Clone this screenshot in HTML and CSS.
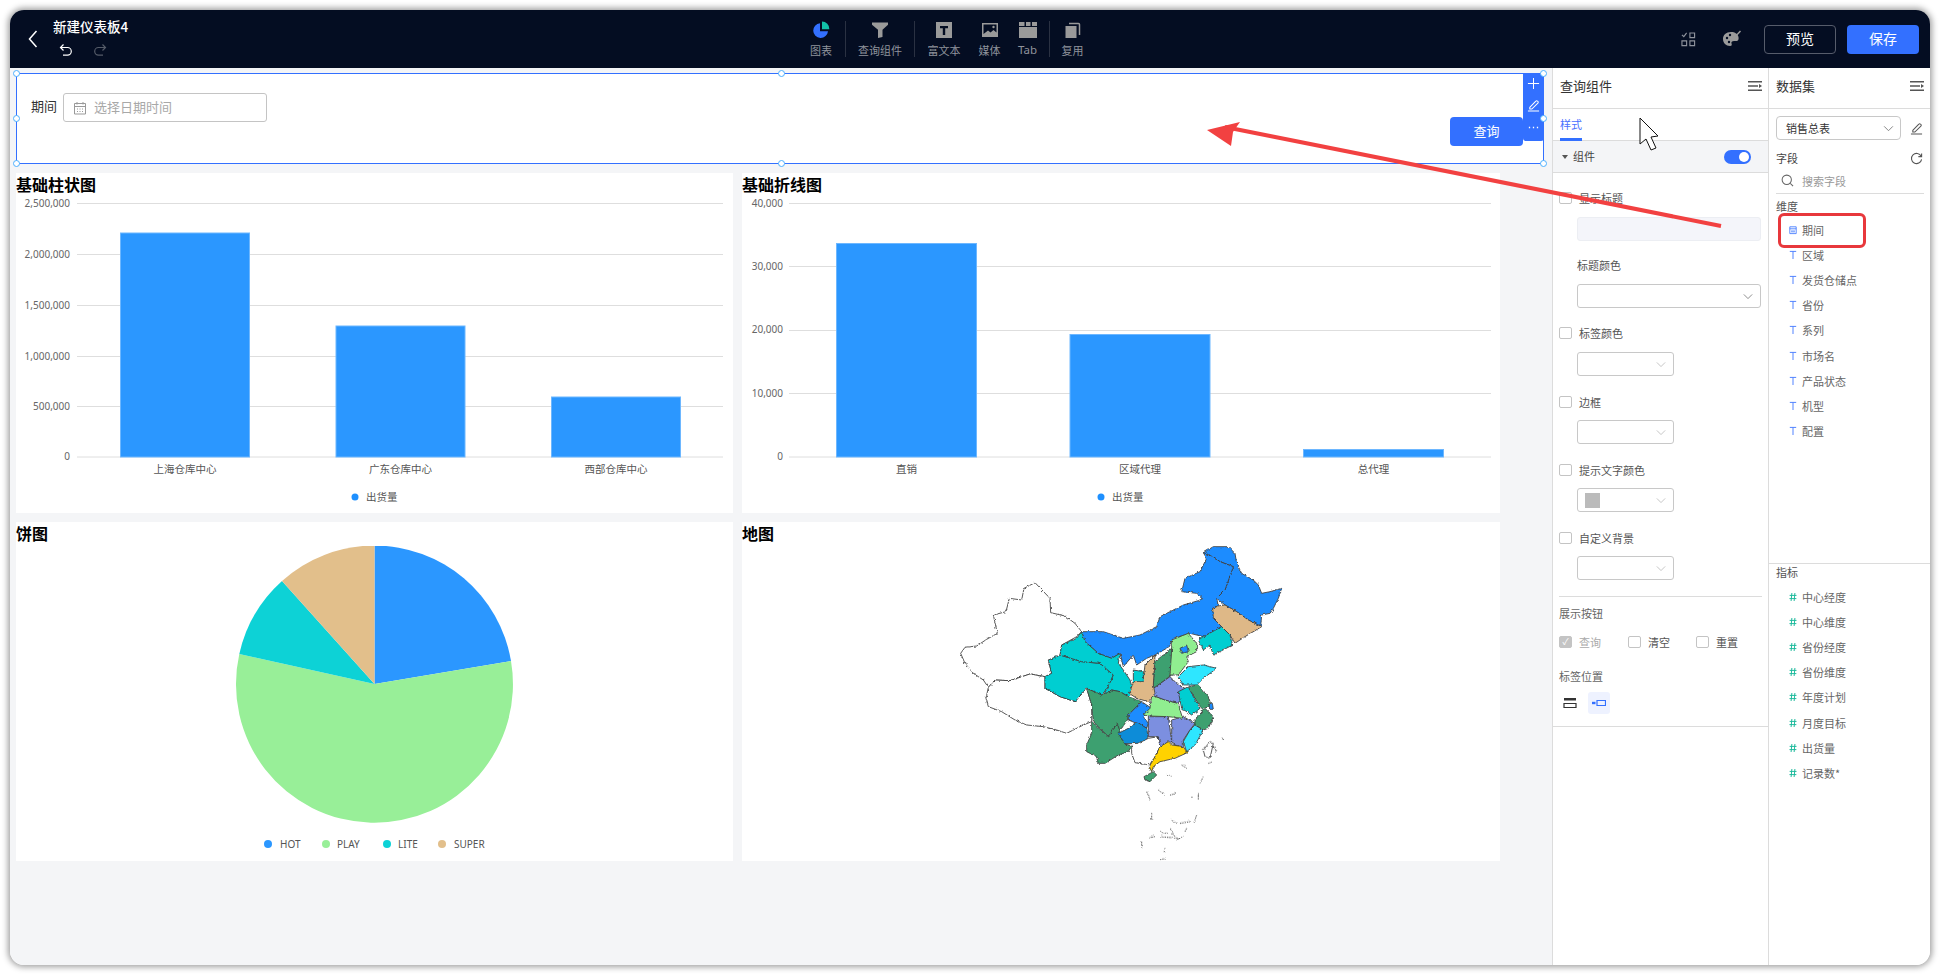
FILE: index.html
```
<!DOCTYPE html>
<html lang="zh">
<head>
<meta charset="utf-8">
<title>新建仪表板4</title>
<link rel="stylesheet" href="styles.css">
</head>
<body>
<svg class="sprite" aria-hidden="true">
  <symbol id="chev" viewBox="0 0 12 8"><path d="M1 1.5 6 6.5 11 1.5" fill="none" stroke="currentColor" stroke-width="1"/></symbol>
  <symbol id="collapse" viewBox="0 0 14 12"><path d="M0 1h14v1.6H0zM0 5.2h10v1.6H0zM0 9.4h14V11H0zM11 4l3 2-3 2z" fill="currentColor"/></symbol>
  <symbol id="pen" viewBox="0 0 14 14"><path d="M3 9 9.5 2.2a1.2 1.2 0 0 1 1.8 0l.4.4a1.2 1.2 0 0 1 0 1.8L5.2 10.8H3zM1 12.9h12" fill="none" stroke="currentColor" stroke-width="1.1"/></symbol>
  <symbol id="tee" viewBox="0 0 10 12"><path d="M1 1.5h8M5 1.5V11" fill="none" stroke="currentColor" stroke-width="1.2"/></symbol>
  <symbol id="hash" viewBox="0 0 10 12"><path d="M3.6 1 2.6 11M7.4 1 6.4 11M.8 4h8.6M.6 8h8.6" fill="none" stroke="currentColor" stroke-width="1.2"/></symbol>
</svg>
<div class="window">
  <header class="topbar">
    <div class="top-left">
      <svg class="back" viewBox="0 0 10 18"><path d="M8.5 1 1.5 9l7 8" fill="none" stroke="#fff" stroke-width="1.5"/></svg>
      <div class="doc">
        <div class="doc-title">新建仪表板4</div>
        <div class="history">
          <svg class="hist-icon" viewBox="0 0 14 14"><path d="M4.5 1.5 1.5 4.5l3 3M1.5 4.5h7a3.8 3.8 0 0 1 0 7.6H4" fill="none" stroke="#fff" stroke-width="1.2"/></svg>
          <svg class="hist-icon" viewBox="0 0 14 14"><path d="M9.5 1.5l3 3-3 3M12.5 4.5h-7a3.8 3.8 0 0 0 0 7.6H10" fill="none" stroke="#555b68" stroke-width="1.2"/></svg>
        </div>
      </div>
    </div>
    <nav class="tools">
      <div class="tool w48 sep">
        <svg class="tool-icon" viewBox="0 0 18 18"><path d="M8 2.2a7.4 7.4 0 1 0 8 8H8z" fill="#3370ff"/><path d="M10 .6a7.4 7.4 0 0 1 7.4 7.6H10z" fill="#12c2a8"/></svg>
        <span>图表</span>
      </div>
      <div class="tool w68 sep">
        <svg class="tool-icon" viewBox="0 0 18 18"><path d="M1 1.5h16v2.2l-5.5 5V16L7 17V8.700L1 3.700z" fill="#9a9a9a"/></svg>
        <span>查询组件</span>
      </div>
      <div class="tool w58">
        <svg class="tool-icon" viewBox="0 0 18 18"><path d="M1 1h16v16H1z" fill="#9a9a9a"/><path d="M5 5h8v2.200h-2.800V14H7.800V7.200H5z" fill="#040d22"/></svg>
        <span>富文本</span>
      </div>
      <div class="tool w32">
        <svg class="tool-icon" viewBox="0 0 18 18"><path d="M1 2h16v14H1z" fill="#9a9a9a"/><path d="M2.500 3.500h13v8l-3-2.500-3 2.500-2.500-2-4.500 3.500z" fill="#040d22"/><circle cx="12.500" cy="6" r="1.200" fill="#9a9a9a"/></svg>
        <span>媒体</span>
      </div>
      <div class="tool w44 sep">
        <svg class="tool-icon" viewBox="0 0 18 18"><path d="M0 1h5.500v4H0zM7 1h4.500v4H7zM13 1h5v4h-5zM0 6h18v11H0z" fill="#9a9a9a"/></svg>
        <span class="latin">Tab</span>
      </div>
      <div class="tool w46">
        <svg class="tool-icon" viewBox="0 0 18 18"><path d="M1.500 5h11v12h-11z" fill="#9a9a9a"/><path d="M5 2.500h9.500a1 1 0 0 1 1 1V14" fill="none" stroke="#9a9a9a" stroke-width="1.500"/></svg>
        <span>复用</span>
      </div>
    </nav>
    <div class="top-right">
      <svg class="right-icon layout-icon" viewBox="0 0 16 16"><path d="M1 3 3 5 6 1M9.500 1h5v5h-5zM1 9.500h5v5H1zM9.500 9.500h5v5h-5z" fill="none" stroke="#8e929c" stroke-width="1.200"/></svg>
      <svg class="right-icon palette-icon" viewBox="0 0 20 18"><path d="M9 2C4 2 1 5 1 9s3 7 7 7c2 0 2-1 1.500-2.500S10 11 12 11h2.500C16 11 17 9.500 16.500 7 16 4 13 2 9 2z" fill="#9a9a9a"/><circle cx="5" cy="8" r="1.200" fill="#040d22"/><circle cx="7" cy="12" r="1.200" fill="#040d22"/><circle cx="8" cy="5" r="1.200" fill="#040d22"/><path d="M11 9 18.500 1" stroke="#9a9a9a" stroke-width="1.500"/></svg>
      <button class="btn ghost">预览</button>
      <button class="btn primary">保存</button>
    </div>
  </header>
  <div class="main">
    <section class="canvas">
      <div class="query">
        <div class="query-form">
          <label class="query-label">期间</label>
          <div class="date-input">
            <svg class="cal" viewBox="0 0 14 14"><path d="M1.500 2.500h11v10.500h-11zM1.500 5.500h11M4 1v2.500M10 1v2.500M4 8h1M6.500 8h1M9 8h1M4 10.500h1M6.500 10.500h1M9 10.500h1" fill="none" stroke="#999" stroke-width="1"/></svg>
            <span>选择日期时间</span>
          </div>
        </div>
        <button class="query-btn">查询</button>
        <div class="side-tools">
          <svg class="side-icon" viewBox="0 0 14 14"><path d="M7 1v12M1 7h12" fill="none" stroke="#fff" stroke-width="1.100"/></svg>
          <svg class="side-icon" viewBox="0 0 14 14"><use href="#pen"/></svg>
          <svg class="side-icon" viewBox="0 0 14 14"><path d="M2 6.300h1.400v1.400H2zM6.300 6.300h1.400v1.400H6.300zM10.600 6.300H12v1.400h-1.400z" fill="#fff"/></svg>
        </div>
        <i class="handle tl"></i><i class="handle tc"></i><i class="handle tr"></i>
        <i class="handle ml"></i><i class="handle mr"></i>
        <i class="handle bl"></i><i class="handle bc"></i><i class="handle br"></i>
      </div>
      <div class="grid">
        <article class="card">
          <h2 class="card-title">基础柱状图</h2>
          <svg class="chart" viewBox="16 197 717 316">
            <g class="gridlines"><path d="M77 203.500H723M77 254.500H723M77 305.500H723M77 356.500H723M77 406.500H723M77 457H723"/></g>
            <g class="bars"><rect x="120.500" y="233" width="129" height="224"/><rect x="336" y="326" width="129" height="131"/><rect x="551.500" y="397" width="129" height="60"/></g>
            <g class="yaxis"><text x="70" y="207">2,500,000</text><text x="70" y="258">2,000,000</text><text x="70" y="309">1,500,000</text><text x="70" y="360">1,000,000</text><text x="70" y="410">500,000</text><text x="70" y="460">0</text></g>
            <g class="xaxis"><text x="185" y="473">上海仓库中心</text><text x="400.500" y="473">广东仓库中心</text><text x="616" y="473">西部仓库中心</text></g>
            <circle class="dot-blue" cx="355" cy="497" r="3.500"/><text class="legend" x="366" y="500.500">出货量</text>
          </svg>
        </article>
        <article class="card">
          <h2 class="card-title">基础折线图</h2>
          <svg class="chart" viewBox="742 197 758 316">
            <g class="gridlines"><path d="M789 203.500H1491M789 266.500H1491M789 330.500H1491M789 393.500H1491M789 457H1491"/></g>
            <g class="bars"><rect x="836.500" y="243.500" width="140" height="213.500"/><rect x="1070" y="334.500" width="140" height="122.500"/><rect x="1303.500" y="449.500" width="140" height="7.500"/></g>
            <g class="yaxis"><text x="783" y="207">40,000</text><text x="783" y="270">30,000</text><text x="783" y="333">20,000</text><text x="783" y="397">10,000</text><text x="783" y="460">0</text></g>
            <g class="xaxis"><text x="906.500" y="473">直销</text><text x="1140" y="473">区域代理</text><text x="1373.500" y="473">总代理</text></g>
            <circle class="dot-blue" cx="1101" cy="497" r="3.500"/><text class="legend" x="1112" y="500.500">出货量</text>
          </svg>
        </article>
        <article class="card">
          <h2 class="card-title">饼图</h2>
          <svg class="chart" viewBox="16 546 717 315">
            <path class="s-blue" d="M374.500 684V545.500A138.500 138.500 0 0 1 511 661Z"/>
            <path class="s-green" d="M374.500 684 511 661A138.500 138.500 0 1 1 239.300 654Z"/>
            <path class="s-teal" d="M374.500 684 239.300 654A138.500 138.500 0 0 1 282 581Z"/>
            <path class="s-tan" d="M374.500 684 282 581A138.500 138.500 0 0 1 374.500 545.500Z"/>
            <circle class="s-blue" cx="268" cy="844" r="4"/><text class="legend latin-l" x="280" y="848">HOT</text>
            <circle class="s-green" cx="326" cy="844" r="4"/><text class="legend latin-l" x="337" y="848">PLAY</text>
            <circle class="s-teal" cx="387" cy="844" r="4"/><text class="legend latin-l" x="398" y="848">LITE</text>
            <circle class="s-tan" cx="442" cy="844" r="4"/><text class="legend latin-l" x="454" y="848">SUPER</text>
          </svg>
        </article>
        <article class="card">
          <h2 class="card-title">地图</h2>
          <svg class="chart" viewBox="742 546 758 315">
            <defs><filter id="rough" filterUnits="userSpaceOnUse" x="0" y="0" width="1200" height="1020"><feTurbulence type="fractalNoise" baseFrequency="0.11" numOctaves="2" seed="4"/><feDisplacementMap in="SourceGraphic" scale="9" xChannelSelector="R" yChannelSelector="G"/></filter></defs>
            <g class="map" filter="url(#rough)" transform="translate(920 530) scale(.33333)">
              <path class="p-white" d="M122 370 135 352 170 348 200 328 232 310 220 255 258 245 268 205 305 210 312 175 345 158 390 205 392 248 435 258 465 280 485 305 470 320 425 345 420 380 385 390 395 430 375 440 330 432 270 452 225 450 205 472 190 450 160 430 135 400Z"/>
              <path class="p-white" d="M205 472 225 450 270 452 330 432 375 440 375 475 420 500 465 515 500 475 515 525 515 575 490 585 440 610 410 600 370 590 320 585 285 570 245 545 205 530 198 505Z"/>
              <path class="p-blue" d="M850 68 880 50 925 50 945 70 950 100 965 130 1000 150 1015 165 1025 190 1050 185 1085 175 1075 205 1060 235 1050 250 1025 255 1022 290 985 270 950 245 915 225 890 205 915 180 940 110 900 95 880 80Z"/>
              <path class="p-blue" d="M485 305 550 305 610 325 660 315 710 290 720 260 790 225 835 212 850 205 830 190 785 185 795 145 840 125 860 85 850 68 880 80 900 95 940 110 915 180 890 205 895 228 878 235 905 290 850 320 810 310 760 325 745 352 705 375 680 385 650 405 640 375 610 410 600 370 575 385 535 370 495 335Z"/>
              <path class="p-tan" d="M895 228 915 225 950 245 985 270 1025 290 975 320 945 340 930 315 905 290 880 265 878 235Z"/>
              <path class="p-teal" d="M905 290 930 315 938 345 880 375 870 345 850 360 835 330 850 320Z"/>
              <g transform="translate(360 270)">
                <path class="p-teal" d="M25 120 60 105 125 125 180 130 220 165 205 200 185 225 140 205 105 245 60 230 15 205 15 170 35 160Z"/>
                <path class="p-teal" d="M125 35 135 65 175 100 215 115 240 100 235 130 250 150 270 180 280 215 265 230 240 215 215 210 190 225 205 200 220 165 180 130 125 125 60 105 65 75 110 55Z"/>
                <path class="p-sea" d="M140 205 185 225 215 210 240 215 265 230 305 245 265 285 262 300 245 325 205 350 160 305 155 255Z"/>
                <path class="p-sea" d="M140 375 155 340 155 305 205 350 232 310 240 335 255 370 275 378 265 395 235 405 195 430 175 430 170 410 140 395Z"/>
                <path class="p-blue" d="M265 285 305 245 335 265 310 290 325 310 320 325 290 310 265 300Z"/>
                <path class="p-deep" d="M235 340 265 325 290 305 320 325 325 355 295 370 255 372Z"/>
                <path class="p-white" d="M255 372 295 370 325 355 355 350 360 380 345 410 328 435 285 428 275 400 275 378Z"/>
                <path class="p-purple" d="M325 290 385 290 395 365 360 380 355 350 325 350Z"/>
                <path class="p-purple" d="M395 300 430 290 465 310 450 330 430 360 430 385 395 370Z"/>
                <path class="p-green" d="M310 285 330 265 335 225 375 240 415 250 420 270 428 295 385 290 325 288Z"/>
                <path class="p-purple" d="M340 205 390 170 415 195 435 205 415 250 375 240 335 225Z"/>
                <path class="p-cyan" d="M415 170 445 140 490 135 530 145 490 175 470 195 430 195Z"/>
                <path class="p-teal" d="M415 215 445 200 465 240 480 265 455 285 425 265Z"/>
                <path class="p-sea" d="M445 200 475 195 505 230 515 260 485 265 465 235Z"/>
                <path class="p-sea" d="M465 300 495 265 520 290 505 325 490 330 465 315Z"/>
                <path class="p-blue" d="M507 255 517 250 520 268 509 268Z"/>
                <path class="p-cyan" d="M450 330 465 315 490 330 465 375 440 395 430 365Z"/>
                <path class="p-gold" d="M360 380 385 365 395 375 430 380 442 398 405 415 360 425 340 440 335 455 328 440 345 410Z"/>
                <path class="p-sea" d="M340 195 345 125 395 85 395 165 340 205Z"/>
                <path class="p-tan" d="M345 105 340 195 345 220 325 245 290 235 268 220 280 185 310 175 315 135Z"/>
                <path class="p-green" d="M395 60 445 40 470 70 470 95 440 110 445 125 415 165 390 165 395 90Z"/>
                <path class="p-blue" d="M420 85 440 75 445 95 425 100Z"/>
                <path class="p-teal" d="M280 150 310 155 310 185 280 185Z"/>
                <path class="p-sea" d="M312 470 340 455 350 465 330 485 315 480Z"/>
              </g>
              <path class="p-white" d="M870 635 880 640 870 685 855 680 850 660Z"/>
              <path class="islands" d="M885 650 888 668M905 625 915 628M865 700 878 695M785 705 800 715M740 735 755 740M850 740 840 760M680 785 690 808M715 780 735 795M750 795 770 790M815 800 818 806M835 790 835 808M695 850 695 868M830 855 822 878M665 935 665 952M685 925 705 918M720 905 745 912M755 870 770 880M780 880 810 875M800 895 795 905M750 895 765 920M720 920 780 925M770 930 790 920M735 955 732 968M720 988 738 986"/>
            </g>
          </svg>
        </article>
      </div>
    </section>
    <aside class="panel style-panel">
      <div class="panel-head"><span>查询组件</span><svg class="collapse"><use href="#collapse"/></svg></div>
      <div class="tabs"><span class="tab active">样式</span></div>
      <div class="section-head">
        <span class="tri"></span><span class="section-name">组件</span>
        <span class="toggle"></span>
      </div>
      <div class="opts">
        <div class="group tight">
          <label class="check-row"><i class="cb"></i>显示标题</label>
          <div class="field wide fill"></div>
          <div class="sub-label">标题颜色</div>
          <div class="field wide"><svg class="chev"><use href="#chev"/></svg></div>
        </div>
        <div class="group tight">
          <label class="check-row"><i class="cb"></i>标签颜色</label>
          <div class="field narrow"><svg class="chev light"><use href="#chev"/></svg></div>
        </div>
        <div class="group">
          <label class="check-row"><i class="cb"></i>边框</label>
          <div class="field narrow"><svg class="chev light"><use href="#chev"/></svg></div>
        </div>
        <div class="group">
          <label class="check-row"><i class="cb"></i>提示文字颜色</label>
          <div class="field narrow"><i class="swatch"></i><svg class="chev light"><use href="#chev"/></svg></div>
        </div>
        <div class="group">
          <label class="check-row"><i class="cb"></i>自定义背景</label>
          <div class="field narrow"><svg class="chev light"><use href="#chev"/></svg></div>
        </div>
        <hr class="rule">
        <div class="cap first">展示按钮</div>
        <div class="btn-checks">
          <label class="check-row off"><i class="cb on">✓</i>查询</label>
          <label class="check-row"><i class="cb"></i>清空</label>
          <label class="check-row"><i class="cb"></i>重置</label>
        </div>
        <div class="cap second">标签位置</div>
        <div class="pos">
          <span class="pos-btn"><svg class="pos-icon" viewBox="0 0 14 10"><path d="M1 0h12v2.500H1z" fill="#333"/><path d="M1 5.500h12v4H1z" fill="none" stroke="#333" stroke-width="1.200"/></svg></span>
          <span class="pos-btn active"><svg class="pos-icon" viewBox="0 0 14 10"><path d="M0 3.800h3.500v2.400H0z" fill="#3370ff"/><path d="M5 2.500h8.500v5H5z" fill="none" stroke="#3370ff" stroke-width="1.200"/></svg></span>
        </div>
      </div>
    </aside>
    <aside class="panel data-panel">
      <div class="panel-head"><span>数据集</span><svg class="collapse"><use href="#collapse"/></svg></div>
      <div class="ds-row">
        <div class="ds-select">销售总表<svg class="chev dark"><use href="#chev"/></svg></div>
        <svg class="ds-icon"><use href="#pen"/></svg>
      </div>
      <div class="fields-head">字段
        <svg class="ds-icon" viewBox="0 0 14 14"><path d="M12 4.500A5.500 5.500 0 1 0 12.500 8M12.500 1.500v3.500H9" fill="none" stroke="#555" stroke-width="1.200"/></svg>
      </div>
      <div class="search">
        <svg class="search-icon" viewBox="0 0 14 14"><circle cx="6.200" cy="6.200" r="5" fill="none" stroke="#666" stroke-width="1.100"/><path d="M10 10l3 3" stroke="#666" stroke-width="1.100"/></svg>
        <span>搜索字段</span>
      </div>
      <div class="dims">
        <div class="cap-data">维度</div>
        <ul class="field-list">
          <li class="selected"><svg class="type" viewBox="0 0 10 12"><path d="M1 2h8v8.500H1zM1 4.500h8M3.500 6.500v2.500M6.500 6.500v2.500M5 6.500v2.500" fill="none" stroke="#3370ff" stroke-width="1"/></svg>期间</li>
          <li><svg class="type blue"><use href="#tee"/></svg>区域</li>
          <li><svg class="type blue"><use href="#tee"/></svg>发货仓储点</li>
          <li><svg class="type blue"><use href="#tee"/></svg>省份</li>
          <li><svg class="type blue"><use href="#tee"/></svg>系列</li>
          <li><svg class="type blue"><use href="#tee"/></svg>市场名</li>
          <li><svg class="type blue"><use href="#tee"/></svg>产品状态</li>
          <li><svg class="type blue"><use href="#tee"/></svg>机型</li>
          <li><svg class="type blue"><use href="#tee"/></svg>配置</li>
        </ul>
      </div>
      <div class="cap-data metric">指标</div>
      <ul class="field-list">
        <li><svg class="type green"><use href="#hash"/></svg>中心经度</li>
        <li><svg class="type green"><use href="#hash"/></svg>中心维度</li>
        <li><svg class="type green"><use href="#hash"/></svg>省份经度</li>
        <li><svg class="type green"><use href="#hash"/></svg>省份维度</li>
        <li><svg class="type green"><use href="#hash"/></svg>年度计划</li>
        <li><svg class="type green"><use href="#hash"/></svg>月度目标</li>
        <li><svg class="type green"><use href="#hash"/></svg>出货量</li>
        <li><svg class="type green"><use href="#hash"/></svg>记录数*</li>
      </ul>
    </aside>
  </div>
  <svg class="overlay" viewBox="0 0 1920 955" aria-hidden="true">
    <path class="arrow-line" d="M1711 216 1215 117"/>
    <path class="arrow-head" d="M1197 120 1230 112 1223 122 1221 136Z"/>
    <path class="pointer" d="M1630 108V134L1636 129 1641 140 1646 138 1641 127 1648 126Z"/>
  </svg>
  <div class="callout"></div>
</div>
</body>
</html>
```
FILE: styles.css
```
* { box-sizing: border-box; }
html, body { margin: 0; height: 100%; overflow: hidden; background: #fff; }
body { font-family: "Noto Sans CJK SC", "Noto Sans", sans-serif; font-size: 11px; color: #555; }
ul { list-style: none; margin: 0; padding: 0; }
.sprite { display: none; }

.window {
  position: relative;
  width: 1920px; height: 955px;
  margin: 10px 0 0 10px;
  border-radius: 14px;
  overflow: hidden;
  display: flex; flex-direction: column;
  background: #fff;
  box-shadow: 0 0 6px 2px rgba(0,0,0,.38);
}

/* top bar */
.topbar { height: 58px; flex: none; display: flex; background: #040d22; color: #fff; }
.top-left { width: 787px; display: flex; align-items: flex-start; }
.back { width: 10px; height: 18px; margin: 20px 0 0 18px; }
.doc { margin-left: 15px; }
.doc-title { font-size: 13.500px; line-height: 18px; margin-top: 7px; font-weight: 500; white-space: nowrap; }
.history { display: flex; gap: 20px; margin-top: 8px; padding-left: 6px; }
.hist-icon { width: 14px; height: 14px; }
.tools { display: flex; height: 58px; align-items: center; }
.tool { height: 36px; display: flex; flex-direction: column; align-items: center; justify-content: space-between; color: #8f939c; font-size: 11px; line-height: 14px; border-right: 1px solid transparent; }
.tool.sep { border-right-color: #2a3142; }
.tool-icon { width: 18px; height: 18px; display: block; }
.w48 { width: 49px; } .w68 { width: 69px; } .w58 { width: 59px; } .w32 { width: 32px; } .w44 { width: 44px; } .w46 { width: 46px; }
.latin { font-family: "Noto Sans", sans-serif; font-size: 11.500px; }
.top-right { margin-left: auto; display: flex; align-items: center; padding-right: 11px; }
.right-icon { display: block; }
.layout-icon { width: 15px; height: 15px; margin-right: 26px; }
.palette-icon { width: 20px; height: 18px; margin-right: 22px; }
.btn { width: 72px; height: 29px; border-radius: 4px; font: 14px "Noto Sans CJK SC", sans-serif; color: #fff; padding: 0 0 2px; }
.btn.ghost { background: transparent; border: 1px solid #565c6b; margin-right: 11px; }
.btn.primary { background: #3370ff; border: 0; }

.main { flex: 1; min-height: 0; display: flex; }

/* canvas */
.canvas { width: 1542px; flex: none; background: #f4f5f7; padding-top: 5px; }
.query { position: relative; margin-left: 6px; width: 1528px; height: 91px; background: #fff; border: 1px solid #3370ff; display: flex; align-items: flex-start; justify-content: space-between; }
.query-form { display: flex; align-items: center; gap: 6px; margin: 19px 0 0 14px; }
.query-label { font-size: 13px; color: #333; padding-bottom: 4px; }
.date-input { width: 204px; height: 29px; border: 1px solid #c4c4c4; border-radius: 3px; display: flex; align-items: center; gap: 7px; padding: 0 0 0 9px; font-size: 13px; color: #a8a8a8; }
.date-input span { padding-bottom: 3px; }
.cal { width: 14px; height: 14px; }
.query-btn { width: 73px; height: 29px; border: 0; border-radius: 4px; background: #3370ff; color: #fff; font: 13px "Noto Sans CJK SC", sans-serif; margin: 43px 20px 0 0; padding: 0 0 3px; }
.side-tools { position: absolute; right: -1px; top: -1px; width: 21px; height: 68px; background: #3370ff; border-radius: 0 0 3px 3px; display: flex; flex-direction: column; align-items: center; padding-top: 4px; gap: 9px; color: #fff; }
.side-icon { width: 13px; height: 13px; display: block; }
.handle { position: absolute; width: 7px; height: 7px; border: 1px solid #4db0ff; border-radius: 50%; background: #fff; }
.tl { left: -4px; top: -4px; } .tc { left: 761px; top: -4px; } .tr { right: -4px; top: -4px; }
.ml { left: -4px; top: 41px; } .mr { right: -4px; top: 41px; }
.bl { left: -4px; bottom: -4px; } .bc { left: 761px; bottom: -4px; } .br { right: -4px; bottom: -4px; }

.grid { display: grid; grid-template-columns: 717px 758px; grid-template-rows: 340px 339px; gap: 9px; margin: 9px 0 0 6px; }
.card { background: #fff; display: flex; flex-direction: column; min-width: 0; }
.card-title { margin: 0; height: 24px; font-size: 16px; line-height: 22px; font-weight: 700; color: #000; flex: none; }
.chart { display: block; width: 100%; flex: 1; min-height: 0; }
.gridlines path { stroke: #dedede; stroke-width: 1; fill: none; }
.bars rect { fill: #2b97ff; stroke: #6db7ff; stroke-width: 1; }
.yaxis text { font-size: 10px; fill: #666; text-anchor: end; font-family: "Noto Sans", sans-serif; }
.xaxis text { font-size: 10.500px; fill: #555; text-anchor: middle; }
.legend { font-size: 10.500px; fill: #555; }
.latin-l { font-family: "Noto Sans", sans-serif; font-size: 10px; }
.dot-blue { fill: #1e90ff; }
.s-blue { fill: #2b97ff; } .s-green { fill: #98ef98; } .s-teal { fill: #0dd2d6; } .s-tan { fill: #e2bf8b; }
.map path { stroke: #3f3f3f; stroke-width: 2.600; stroke-linejoin: round; }
.p-white { fill: #fff; } .p-blue { fill: #1e8cff; } .p-teal { fill: #00ced1; } .p-tan { fill: #deb887; }
.p-green { fill: #90ee90; } .p-cyan { fill: #2ee6ff; } .p-sea { fill: #3ca070; } .p-purple { fill: #7b8fe0; }
.p-deep { fill: #0a8cd8; } .p-gold { fill: #ffd200; }
.map .islands { fill: none; stroke: #222; stroke-width: 2.500; stroke-dasharray: 4 3; }

/* side panels */
.panel { flex: none; border-left: 1px solid #dcdcdc; background: #fff; }
.style-panel { width: 216px; }
.data-panel { width: 162px; }
.panel-head { height: 41px; border-bottom: 1px solid #dcdcdc; display: flex; align-items: center; justify-content: space-between; font-size: 13px; color: #333; padding: 0 6px 0 7px; }
.panel-head span { padding-bottom: 6px; }
.collapse { width: 14px; height: 12px; color: #555; margin-bottom: 4px; }
.tabs { height: 32px; padding-left: 7px; border-bottom: 1px solid #dcdcdc; }
.tab { display: inline-block; height: 32px; line-height: 30px; color: #4a70ff; border-bottom: 3px solid #3370ff; width: 22px; font-size: 11px; }
.section-head { height: 32px; background: #f4f5f7; border-bottom: 1px solid #dcdcdc; display: flex; align-items: center; padding: 0 17px 0 9px; color: #444; }
.tri { width: 0; height: 0; border: 3.500px solid transparent; border-top: 4px solid #555; border-bottom: 0; }
.section-name { margin-left: 5px; flex: 1; padding-bottom: 2px; }
.toggle { position: relative; width: 27px; height: 14px; border-radius: 7px; background: #3370ff; }
.toggle::after { content: ""; position: absolute; right: 2px; top: 2px; width: 10px; height: 10px; border-radius: 50%; background: #fff; }
.opts { padding: 0 6px 12px 6px; border-bottom: 1px solid #dcdcdc; }
.group { margin-top: 18px; }
.group.tight { margin-top: 17px; }
.group.tight .field { margin-top: 11px; }
.group.tight .sub-label { margin-top: 16px; }
.check-row { display: flex; align-items: center; height: 16px; gap: 7px; color: #555; }
.cb { width: 13px; height: 12px; border: 1px solid #c4c4c4; border-radius: 2px; background: #fff; flex: none; font-style: normal; }
.cb.on { background: #c4c4c4; color: #fff; font-size: 9px; line-height: 10px; text-align: center; }
.off { color: #aaa; }
.field { position: relative; margin: 10px 0 0 18px; height: 24px; border: 1px solid #c8c8c8; border-radius: 3px; display: flex; align-items: center; }
.wide { width: 184px; } .narrow { width: 97px; }
.fill { background: #f4f5fa; border-color: #eceef3; }
.sub-label { margin: 17px 0 0 18px; height: 16px; line-height: 16px; }
.chev { position: absolute; right: 7px; top: 8px; width: 10px; height: 7px; color: #777; }
.chev.light { color: #bbb; }
.swatch { width: 15px; height: 15px; margin-left: 7px; background: #bbb; }
.rule { margin: 16px 0 0; border: 0; border-top: 1px solid #dcdcdc; }
.cap { height: 16px; line-height: 16px; color: #666; }
.cap.first { margin-top: 8px; }
.btn-checks { display: grid; grid-template-columns: 69px 68px auto; margin-top: 13px; }
.cap.second { margin-top: 18px; }
.pos { display: flex; margin-top: 8px; gap: 7px; }
.pos-btn { width: 22px; height: 22px; display: flex; align-items: center; justify-content: center; border-radius: 3px; }
.pos-btn.active { background: #eef2ff; }
.pos-icon { width: 14px; height: 10px; }

.ds-row { display: flex; align-items: center; padding: 7px 6px 0 7px; justify-content: space-between; }
.ds-select { position: relative; width: 125px; height: 24px; border: 1px solid #c8c8c8; border-radius: 4px; line-height: 22px; padding-left: 9px; color: #333; }
.chev.dark { top: 8px; right: 6px; width: 11px; }
.ds-icon { width: 13px; height: 13px; color: #555; margin-right: 1px; }
.fields-head { display: flex; align-items: center; justify-content: space-between; height: 16px; margin-top: 10px; padding: 0 6px 0 7px; color: #444; }
.search { display: flex; align-items: center; gap: 8px; height: 22px; margin: 6px 6px 0 7px; padding: 0 0 4px 5px; border-bottom: 1px solid #dcdcdc; color: #999; }
.search-icon { width: 13px; height: 13px; }
.dims { height: 368px; border-bottom: 1px solid #dcdcdc; }
.cap-data { height: 20px; line-height: 20px; padding-left: 7px; margin-top: 2px; color: #555; }
.dims .cap-data { margin-bottom: 1px; }
.cap-data.metric { margin-top: 0; margin-bottom: 0; line-height: 17px; }
.field-list li { position: relative; height: 25.200px; display: flex; align-items: center; padding-left: 20px; gap: 5px; color: #666; }
.type { width: 8px; height: 10px; flex: none; }
.blue { color: #4a7dff; }
.green { color: #18b89a; }
.selected { color: #555; }

/* overlays */
.overlay { position: absolute; left: 0; top: 0; width: 1920px; height: 955px; pointer-events: none; }
.arrow-line { stroke: #f24141; stroke-width: 4; fill: none; }
.arrow-head { fill: #f24141; }
.pointer { fill: #fff; stroke: #111; stroke-width: 1; }
.callout { position: absolute; left: 1768px; top: 203px; width: 88px; height: 35px; border: 3.500px solid #e8383c; border-radius: 6px; pointer-events: none; }
```
